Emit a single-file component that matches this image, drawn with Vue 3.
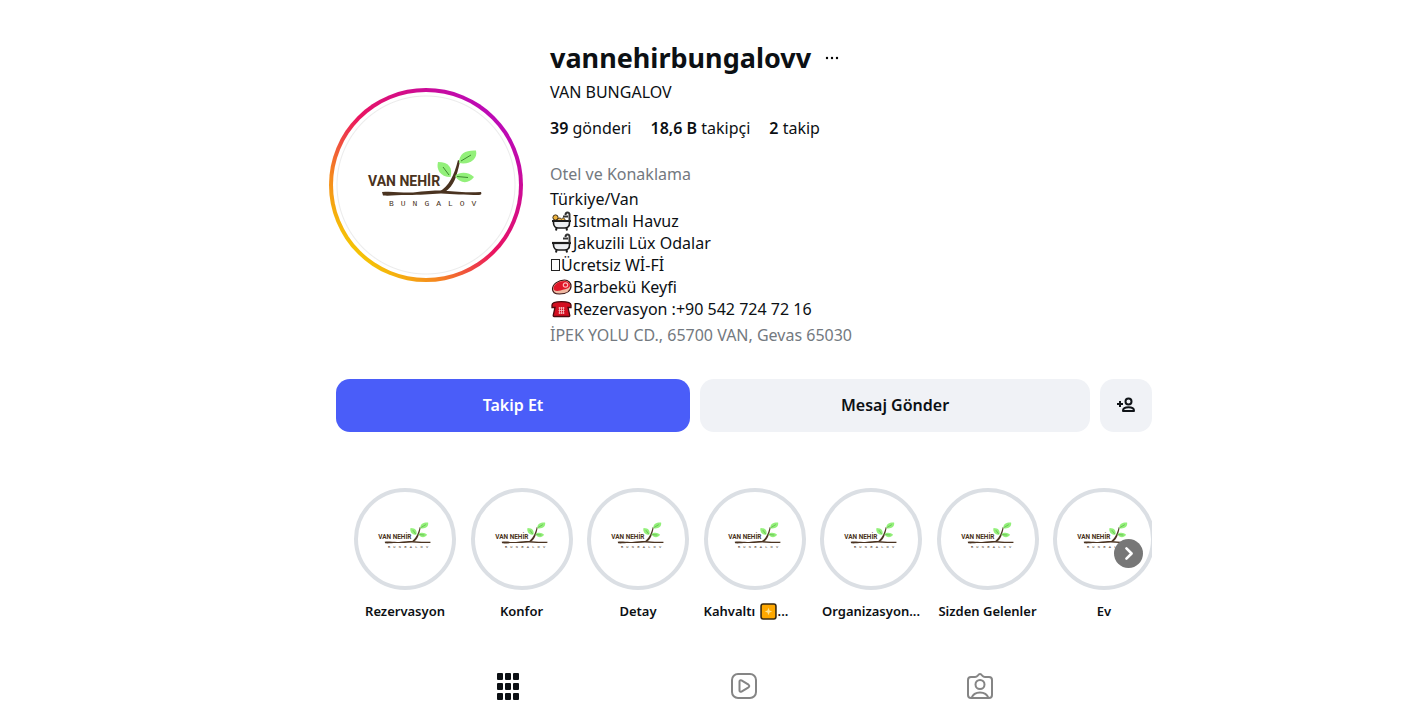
<script setup>
import { h } from 'vue'

const brown = '#4a3320'
const Logo = () =>
  h('svg', { class: 'logo', viewBox: '0 0 130 75', 'aria-hidden': 'true' }, [
    h('text', { class: 'logo-name', x: 7, y: 45 }, 'VAN NEHİR'),
    h('text', { class: 'logo-sub', x: 28, y: 65 }, 'BUNGALOV'),
    h('path', { fill: brown, d: 'M21 51C32 50 40 52 52 51.5C64 50 72 49.5 80 49.5C92 50 100 52 120 51C121 53 120 54 118 54C103 54 92 53 80 52.5C68 53 60 54 46 54C36 54 29 55 22 54.5Z' }),
    h('path', { fill: brown, d: 'M78 51C88 45 93 35 97 19L99 20C96 35 93 45 84 51Z' }),
    h('path', { fill: '#93f07a', d: 'M98 22C98 12 105 9 115 9.5C117 18 109 24 98 22Z' }),
    h('path', { fill: '#93f07a', d: 'M89.5 36C79 36 75 28 77 21C88 21 92 27 89.5 36Z' }),
    h('path', { fill: '#93f07a', d: 'M94 35C99 30 108 31 113 36C108 43 99 43 94 35Z' }),
    h('path', { fill: 'none', stroke: '#3d8a2e', d: 'M100 20L110 14M82 26L88 34M96 35.500L107 36.500' }),
  ])

const highlights = [
  { label: 'Rezervasyon' },
  { label: 'Konfor' },
  { label: 'Detay' },
  { label: 'Kahvaltı', badge: true },
  { label: 'Organizasyon...' },
  { label: 'Sizden Gelenler' },
  { label: 'Ev' },
]
const bio = [
  { text: 'Türkiye/Van' },
  { icon: 'bather', text: 'Isıtmalı Havuz' },
  { icon: 'bath', text: 'Jakuzili Lüx Odalar' },
  { icon: 'box', text: 'Ücretsiz Wİ-Fİ' },
  { icon: 'meat', text: 'Barbekü Keyfi' },
  { icon: 'phone', text: 'Rezervasyon :+90 542 724 72 16' },
]
</script>

<template>
  <div class="page">
    <svg class="defs" aria-hidden="true">
      <symbol id="bath" viewBox="0 0 22 20">
        <path d="M3 10H19V12C19 15 17 17 14 17H8C5 17 3 15 3 12Z" fill="#eceef1" stroke="#1c1c1c" stroke-width="1.600" />
        <path d="M1.500 10H20.500" stroke="#1c1c1c" stroke-width="2.200" />
        <path d="M19 10V3.500C19 .8 15 .8 15 4M12.500 5.500H17.500" stroke="#333" stroke-width="2" fill="none" />
        <path d="M6 17L5.500 19.500M16 17L16.500 19.500" stroke="#1c1c1c" stroke-width="2" />
      </symbol>
      <symbol id="bather" viewBox="0 0 22 20">
        <circle cx="5" cy="6.500" r="2.600" fill="#efb43f" stroke="#3a2a12" />
        <path d="M6 10C8 6 10 7 11 8C13 6 14 7 15 10V11H6Z" fill="#f3b94a" stroke="#3a2a12" />
        <use href="#bath" width="22" height="20" />
      </symbol>
      <symbol id="box" viewBox="0 0 11 20">
        <rect x="1.500" y="4.500" width="8" height="11" fill="none" stroke="#222" />
      </symbol>
      <symbol id="meat" viewBox="0 0 22 20">
        <path d="M2 12C2 7 8 3 14 3C18 3 20.500 6 20.500 9C20.500 14 16 17 9 17C4 17 2 15 2 12Z" fill="#f0b9a2" stroke="#3b1515" stroke-width="1.200" />
        <path d="M3 11C4 7 8 4 14 4C18 4 19.500 6.500 19.500 8.500C19 12 14 12 10 13.500C6 14.500 3 14 3 11Z" fill="#df1628" />
        <circle cx="15" cy="8" r="2.200" fill="#df1628" stroke="#ffb7b7" stroke-width="1.200" />
      </symbol>
      <symbol id="phone" viewBox="0 0 22 20">
        <path d="M1.500 8V6C1.500 3.500 4 2.700 11 2.700S20.500 3.500 20.500 6V8.500H17.500L19.300 16.500C19.300 17.200 19 17.500 18.500 17.500H3.500C3 17.500 2.700 17.200 2.700 16.500L4.500 8.500H1.500Z" fill="#d30e20" stroke="#4a0a0e" stroke-width="1.300" />
        <path d="M8 9H14M8 11.500H14M8 14H14M9 8V15M11 8V15M13 8V15" stroke="#f7c4c6" stroke-width=".8" />
      </symbol>
    </svg>

    <main class="profile">
      <header class="head">
        <button class="avatar" aria-label="Profil fotoğrafı">
          <span class="photo"><Logo class="avatar-logo" /></span>
        </button>
        <div class="info">
          <div class="title">
            <h1>vannehirbungalovv</h1>
            <button class="more" aria-label="Seçenekler">
              <svg viewBox="0 0 14 4"><circle cx="2" cy="2" r="1.200" /><circle cx="7" cy="2" r="1.200" /><circle cx="12" cy="2" r="1.200" /></svg>
            </button>
          </div>
          <p class="name">VAN BUNGALOV</p>
          <ul class="stats">
            <li><b>39</b> gönderi</li>
            <li><a href="#"><b>18,6 B</b> takipçi</a></li>
            <li><a href="#"><b>2</b> takip</a></li>
          </ul>
          <p class="muted category">Otel ve Konaklama</p>
          <ul class="bio">
            <li v-for="line in bio" :key="line.text">
              <svg v-if="line.icon" class="emoji" :class="{ slim: line.icon === 'box' }" aria-hidden="true"><use :href="'#' + line.icon" /></svg>
              <span>{{ line.text }}</span>
            </li>
          </ul>
          <p class="muted address">İPEK YOLU CD., 65700 VAN, Gevas 65030</p>
        </div>
      </header>

      <div class="actions">
        <button class="btn follow">Takip Et</button>
        <button class="btn message">Mesaj Gönder</button>
        <button class="btn similar" aria-label="Benzer hesaplar">
          <svg viewBox="0 0 20 16" fill="none" stroke="#101418" stroke-width="2">
            <circle cx="12.500" cy="4.500" r="3" />
            <path d="M7 14C6.800 11.500 9 10.200 12.500 10.200S18.200 11.500 18 14Z" stroke-linejoin="round" />
            <path d="M1 7H7M4 4V10" />
          </svg>
        </button>
      </div>

      <section class="highlights">
        <ul>
          <li v-for="item in highlights" :key="item.label">
            <a href="#">
              <span class="ring"><Logo class="ring-logo" /></span>
              <span class="label" :class="{ start: item.badge }">{{ item.label }}<template v-if="item.badge">&nbsp;<svg class="badge" viewBox="0 0 16 16" aria-hidden="true">
                <rect x="1" y="1" width="14" height="14" rx="2" fill="#ffa800" stroke="#3a2a10" stroke-width="1.500" />
                <path d="M8 4.500L9 7L11.500 8L9 9L8 11.500L7 9L4.500 8L7 7Z" fill="#ffe08a" />
              </svg>...</template></span>
            </a>
          </li>
        </ul>
        <button class="next" aria-label="İleri">
          <svg viewBox="0 0 28 28"><path d="M12 9L17 14L12 19" fill="none" stroke="#fff" stroke-width="2.500" stroke-linecap="round" stroke-linejoin="round" /></svg>
        </button>
      </section>

      <nav class="tabs">
        <a href="#" aria-label="Gönderiler">
          <svg viewBox="0 0 28 28" fill="#0c1014">
            <template v-for="r in 3" :key="r">
              <rect v-for="c in 3" :key="c" :x="c * 8 - 5" :y="r * 10 - 9" width="6" height="7" rx="1" />
            </template>
          </svg>
        </a>
        <a href="#" aria-label="Reels">
          <svg viewBox="0 0 28 28" fill="none" stroke="#858585" stroke-width="2" stroke-linejoin="round">
            <rect x="2" y="2" width="24" height="24" rx="6" />
            <path d="M9.500 9.500C9.500 8.300 10.500 7.900 11.500 8.400L18.500 12.700C19.500 13.400 19.500 14.600 18.500 15.300L11.500 19.600C10.500 20.100 9.500 19.700 9.500 18.500Z" />
          </svg>
        </a>
        <a href="#" aria-label="Etiketlenenler">
          <svg viewBox="0 0 28 28" fill="none" stroke="#858585" stroke-width="2" stroke-linejoin="round">
            <path d="M5 5H9C10.500 5 11 4.500 12 3.300C13.200 1.500 14.800 1.500 16 3.300C17 4.500 17.500 5 19 5H23C25 5 26 6 26 8V23C26 25 25 26 23 26H5C3 26 2 25 2 23V8C2 6 3 5 5 5Z" />
            <circle cx="14" cy="12.500" r="4.500" />
            <path d="M5.500 26C7 22 10 20.500 14 20.500S21 22 22.500 26" />
          </svg>
        </a>
      </nav>
    </main>
  </div>
</template>

<style>
body {
  margin: 0;
  background: #fff;
}
.logo-name {
  font: 700 14px Roboto, "Liberation Sans", sans-serif;
  fill: #4a3320;
}
.logo-sub {
  font: 8px "Liberation Mono", monospace;
  letter-spacing: 7px;
  fill: #4a3320;
}
</style>

<style scoped>
.page {
  padding: 40px 0 0 87px;
  color: #0c1014;
  font: 16px/22px "Noto Sans", "Open Sans", sans-serif;
}
.defs {
  position: absolute;
  width: 0;
  height: 0;
}
.profile {
  max-width: 830px;
  margin: 0 auto;
}
h1, p, ul {
  margin: 0;
  padding: 0;
}
ul {
  list-style: none;
}
a {
  color: inherit;
  text-decoration: none;
}
button {
  border: 0;
  padding: 0;
  background: none;
  color: inherit;
  font: inherit;
  cursor: pointer;
}
.head {
  display: flex;
  gap: 27px;
}
.avatar {
  flex: none;
  align-self: flex-start;
  box-sizing: border-box;
  width: 194px;
  height: 194px;
  margin-top: 48px;
  padding: 4px;
  border-radius: 50%;
  background: linear-gradient(45deg, #f5d000 12%, #f5871f 28%, #ea1460 50%, #cb0b98 75%, #b80abf 88%);
}
.photo {
  display: grid;
  place-items: center;
  height: 100%;
  border-radius: 50%;
  background: radial-gradient(circle closest-side, #fff 88px, #ebebeb 89px, #fff 90px);
}
.avatar-logo {
  width: 130px;
  height: 75px;
  margin-bottom: 14px;
}
.title {
  display: flex;
  align-items: center;
  gap: 14px;
}
h1 {
  font-size: 27px;
  line-height: 36px;
  font-weight: 700;
}
.more svg {
  display: block;
  width: 14px;
  height: 4px;
}
.name {
  margin-top: 5px;
}
.stats {
  display: flex;
  gap: 19px;
  margin-top: 14px;
}
b {
  font-weight: 600;
}
.category {
  margin-top: 24px;
}
.muted {
  color: #737980;
}
.bio {
  margin-top: 3px;
}
.bio li {
  display: flex;
  align-items: center;
}
.emoji {
  flex: none;
  width: 23px;
  height: 20px;
}
.emoji.slim {
  width: 11px;
}
.address {
  margin-top: 4px;
}
.actions {
  display: flex;
  gap: 10px;
  margin: 33px 7px 0;
}
.btn {
  height: 53px;
  padding-bottom: 2px;
  border-radius: 14px;
  background: #f0f2f6;
  font-weight: 600;
}
.follow {
  flex: 354;
  background: #4a5df9;
  color: #fff;
}
.message {
  flex: 390;
}
.similar {
  display: grid;
  place-items: center;
  flex: none;
  width: 52px;
}
.similar svg {
  width: 20px;
  height: 16px;
}
.highlights {
  position: relative;
  overflow: hidden;
  margin: 56px 7px 0;
}
.highlights ul {
  display: flex;
  justify-content: space-between;
  margin: 0 -3px 0 18px;
}
.highlights li {
  flex: none;
  width: 102px;
}
.ring {
  display: grid;
  place-items: center;
  box-sizing: border-box;
  height: 102px;
  border: 4px solid #dbdfe4;
  border-radius: 50%;
}
.ring-logo {
  width: 60px;
  height: 35px;
  margin-bottom: 8px;
}
.label {
  display: flex;
  align-items: center;
  justify-content: center;
  margin-top: 10px;
  font-size: 13px;
  font-weight: 600;
  white-space: nowrap;
}
.label.start {
  justify-content: flex-start;
}
.badge {
  width: 17px;
  height: 17px;
  margin: 0 1px;
}
.next {
  position: absolute;
  top: 51px;
  right: 9px;
  width: 29px;
  height: 29px;
  border-radius: 50%;
  background: #777;
}
.next svg {
  display: block;
  width: 100%;
}
.tabs {
  display: flex;
  margin: 50px 61px 0;
}
.tabs a {
  display: grid;
  place-items: center;
  flex: 1;
}
.tabs svg {
  width: 28px;
  height: 28px;
}
</style>
